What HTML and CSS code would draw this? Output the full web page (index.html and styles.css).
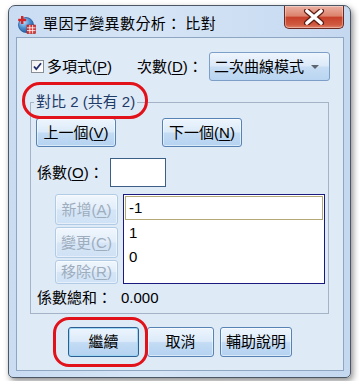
FILE: index.html
```html
<!DOCTYPE html>
<html lang="zh-Hant">
<head>
<meta charset="utf-8">
<link rel="stylesheet" href="styles.css">
</head>
<body>
<div class="window">
  <div class="titlebar">
    <svg class="app-icon" width="19" height="19" viewBox="0 0 19 19">
      <defs>
        <radialGradient id="g1" cx="0.35" cy="0.3" r="0.8">
          <stop offset="0" stop-color="#bfe0ff"/>
          <stop offset="0.5" stop-color="#4d8fd0"/>
          <stop offset="1" stop-color="#1d4f93"/>
        </radialGradient>
      </defs>
      <circle cx="9" cy="10" r="7.5" fill="url(#g1)" stroke="#2a5a98" stroke-width="0.8"/>
      <rect x="4" y="1" width="2.4" height="8" fill="#d42424"/>
      <rect x="1.2" y="3.8" width="8" height="2.4" fill="#d42424"/>
      <rect x="10" y="10" width="8.5" height="8.5" fill="#d63a3a" stroke="#a81c1c" stroke-width="0.6"/>
      <path d="M10 12.8h8.5M10 15.6h8.5M12.8 10v8.5M15.6 10v8.5" stroke="#fff" stroke-width="0.8"/>
    </svg>
    <span class="title">單因子變異數分析： 比對</span>
    <div class="close">
      <svg width="22" height="16" viewBox="0 0 22 16">
        <path d="M4 2L18 14M18 2L4 14" stroke="#5e1d14" stroke-width="6" stroke-linecap="round"/>
        <path d="M4 2L18 14M18 2L4 14" stroke="#ffffff" stroke-width="3.6" stroke-linecap="round"/>
      </svg>
    </div>
  </div>
  <div class="client">
    <div class="row-top">
      <label class="check">
        <span class="box">
          <svg width="11" height="11" viewBox="0 0 11 11"><path d="M2 5.5L4.3 8.2L9 2.3" fill="none" stroke="#1d2c6b" stroke-width="1.8"/></svg>
        </span>
        <span>多項式(<u>P</u>)</span>
      </label>
      <span class="deg-label">次數(<u>D</u>)：</span>
      <div class="select">
        <span>二次曲線模式</span>
        <span class="arrow"></span>
      </div>
    </div>
    <fieldset class="group">
      <legend>對比 2 (共有 2)</legend>
      <div class="nav">
        <div class="btn nav-btn">上一個(<u>V</u>)</div>
        <div class="btn nav-btn">下一個(<u>N</u>)</div>
      </div>
      <div class="coef-row">
        <span class="coef-label">係數(<u>O</u>)：</span>
        <div class="coef-input"></div>
      </div>
      <div class="edit-area">
        <div class="side-btns">
          <div class="btn disabled b1">新增(<u>A</u>)</div>
          <div class="btn disabled b2">變更(<u>C</u>)</div>
          <div class="btn disabled b3">移除(<u>R</u>)</div>
        </div>
        <div class="list">
          <div class="item focus">-1</div>
          <div class="item">1</div>
          <div class="item">0</div>
        </div>
      </div>
      <div class="sum"><span class="sum-label">係數總和：</span><span>0.000</span></div>
    </fieldset>
    <div class="bottom">
      <div class="btn default w1">繼續</div>
      <div class="btn w2">取消</div>
      <div class="btn w3">輔助說明</div>
    </div>
  </div>
</div>
<div class="mark mark-legend"></div>
<div class="mark mark-continue"></div>
</body>
</html>
```

FILE: styles.css
```css
* { box-sizing: border-box; }
html, body { margin: 0; padding: 0; }
body {
  background: #ffffff;
  width: 359px;
  height: 381px;
  overflow: hidden;
  position: relative;
  font-family: "Liberation Sans", "Noto Sans CJK TC", sans-serif;
  font-size: 15px;
  color: #000;
}
u { text-decoration: underline; text-underline-offset: 2px; }

.window {
  margin: 5px 0 0 8px;
  width: 343px;
  height: 373px;
  border: 1px solid #4c5766;
  border-radius: 7px 7px 5px 5px;
  background: linear-gradient(90deg, #c9dcf2 0%, #d6e5f6 40%, #c4d8f0 100%);
  box-shadow: 2px 3px 6px rgba(0,0,0,0.45);
  display: flex;
  flex-direction: column;
}

.titlebar {
  height: 31px;
  display: flex;
  align-items: flex-start;
  padding-left: 8px;
}
.app-icon { margin-top: 9px; flex: none; }
.title {
  margin-left: 7px;
  margin-top: 7px;
  line-height: 20px;
  font-size: 15px;
  letter-spacing: 0.4px;
  color: #000;
  font-family: "Noto Sans CJK TC", sans-serif;
}
.close {
  margin-left: auto;
  margin-right: 6px;
  width: 60px;
  height: 23px;
  border: 1px solid #6a2a22;
  border-top: none;
  border-radius: 0 0 5px 5px;
  background: linear-gradient(#eab0a2 0%, #dd836d 45%, #c8412a 52%, #cf5a40 85%, #e0846c 100%);
  display: flex;
  align-items: center;
  justify-content: center;
  box-shadow: inset 0 0 0 1px rgba(255,255,255,0.35);
}

.client {
  margin: 0 6px 0 7px;
  height: 334px;
  border: 1px solid #8ea6c2;
  background: #dfeaf7;
  padding: 14px 0 0 14px;
}

.row-top {
  display: flex;
  align-items: center;
  height: 29px;
}
.check {
  width: 106px;
  display: flex;
  align-items: center;
  font-family: "Noto Sans CJK TC", sans-serif;
  line-height: 18px;
}
.check span:last-child { font-family: "Liberation Sans", "Noto Sans CJK TC", sans-serif; }
.box {
  width: 13px;
  height: 13px;
  border: 1px solid #8a8f96;
  background: linear-gradient(135deg, #f0f0f0, #ffffff);
  display: flex;
  align-items: center;
  justify-content: center;
  margin-right: 3px;
}
.deg-label {
  width: 72px;
  line-height: 18px;
}
.select {
  width: 121px;
  height: 29px;
  border: 1px solid #7d9ec6;
  border-radius: 3px;
  background: linear-gradient(#eef5fd 0%, #dce9f8 48%, #c7ddf4 52%, #b9d5f1 100%);
  display: flex;
  align-items: center;
  padding-left: 4px;
  line-height: 18px;
}
.arrow {
  margin-left: auto;
  margin-right: 10px;
  width: 0;
  height: 0;
  border-left: 4px solid transparent;
  border-right: 4px solid transparent;
  border-top: 4px solid #5d6670;
}

.group {
  margin: 12px 0 0 -1px;
  width: 299px;
  height: 221px;
  border: 1px solid #a4b4c6;
  padding: 7px 0 0 5px;
  min-width: 0;
}
.group legend {
  padding: 0 2px;
  margin-left: -2px;
  line-height: 18px;
  color: #1e3a66;
}

.btn {
  border: 1px solid #5783b4;
  border-radius: 3px;
  background: linear-gradient(#edf5fd 0%, #dbeaf9 48%, #c4dcf4 52%, #b4d2f1 100%);
  display: flex;
  align-items: center;
  justify-content: center;
  line-height: 18px;
  box-shadow: inset 0 0 0 1px rgba(255,255,255,0.5);
}
.nav { display: flex; gap: 46px; }
.nav-btn { width: 80px; height: 29px; }

.coef-row {
  margin-top: 11px;
  display: flex;
  align-items: center;
  height: 29px;
}
.coef-label { width: 74px; padding-left: 1px; line-height: 18px; }
.coef-input {
  width: 56px;
  height: 29px;
  border: 1px solid #3d5f86;
  background: #fff;
}

.edit-area {
  margin-top: 7px;
  display: flex;
}
.side-btns {
  margin-left: 19px;
  width: 63px;
  display: flex;
  flex-direction: column;
  gap: 2px;
}
.btn.disabled {
  border-color: #b1cbe6;
  background: linear-gradient(#f0f6fc 0%, #e3eefa 48%, #d6e6f7 52%, #cfe1f5 100%);
  color: #9eadbd;
}
.b1, .b2 { height: 31px; }
.b3 { height: 24px; }
.list {
  margin-left: 5px;
  width: 202px;
  height: 90px;
  border: 1px solid #1a1a80;
  background: #fff;
  padding: 1px 1px;
}
.item {
  height: 24px;
  line-height: 22px;
  padding-left: 3px;
  border: 1px solid transparent;
}
.item + .item { line-height: 24px; }
.item.focus { border-color: #b3a876; }

.sum {
  margin-top: 5px;
  line-height: 18px;
  padding-left: 1px;
  display: flex;
}
.sum-label { width: 84px; }

.bottom {
  margin: 13px 0 0 37px;
  display: flex;
  gap: 8px;
}
.bottom .btn { height: 30px; }
.w1 { width: 71px; }
.w2 { width: 67px; margin-right: -2px; }
.w3 { width: 72px; }
.btn.default {
  border-color: #2b5f93;
  box-shadow: inset 0 0 0 1px #9fd6f3;
}

.mark {
  position: absolute;
  border: 3px solid #e2121a;
  pointer-events: none;
}
.mark-legend {
  left: 22px;
  top: 82px;
  width: 126px;
  height: 37px;
  border-radius: 18px;
}
.mark-continue {
  left: 53px;
  top: 317px;
  width: 95px;
  height: 50px;
  border-radius: 16px;
}
```
